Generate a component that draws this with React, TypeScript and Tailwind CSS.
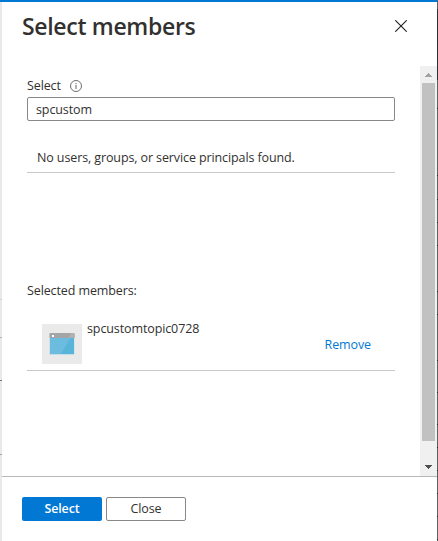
import React from "react";

const leftTicks = [
  { top: 299, color: "bg-[#d2d2d2]" },
  { top: 337, color: "bg-[#b0b0b0]" },
  { top: 380, color: "bg-[#777777]" },
  { top: 454, color: "bg-[#a5a5a5]" },
];

const rightTicks = [41, 108, 175, 199, 222, 245, 291, 314, 360, 392, 424, 447, 470, 493, 516, 539];

function InfoIcon() {
  return (
    <svg className="ml-[9px] h-3 w-3" viewBox="0 0 12 12" fill="none" stroke="#605e5c">
      <circle cx="6" cy="6" r="5.5" strokeWidth="0.9" />
      <path d="M6 5v4M6 3v1.1" strokeWidth="1" />
    </svg>
  );
}

function AppIcon() {
  return (
    <div className="flex h-10 w-10 items-center justify-center bg-[#eaeaea]">
      <svg className="h-[22px] w-[26px]" viewBox="0 0 26 22">
        <rect x="0.4" y="0" width="25" height="22" rx="1" fill="#c4dde7" />
        <path d="M1 5h24v16H1z" fill="#59b4d9" />
        <path d="M1 5h20.500L12 21H1z" fill="#6bbcde" />
        <path d="M0.500 1q0-1 1-1h23q1 0 1 1v4h-25z" fill="#a3a5a6" />
        <path d="M22 0h2.500q1 0 1 1v4h-6z" fill="#afb0b1" />
        <rect x="3" y="2" width="2" height="2" fill="#fff" />
      </svg>
    </div>
  );
}

function Scrollbar() {
  return (
    <div className="flex w-[17px] shrink-0 flex-col items-center bg-[#f0f0f0]">
      <div className="flex h-[17px] items-center justify-center">
        <svg className="h-[17px] w-[17px]" viewBox="0 0 17 17" shapeRendering="crispEdges">
          <path d="M8 7h1v1h1v1h1v1h1v1H5v-1h1V9h1V8h1z" fill="#a3a3a3" />
        </svg>
      </div>
      <div className="h-[358px] w-[13px] bg-[#c1c1c1]" />
      <div className="mt-auto">
        <svg className="h-[17px] w-[17px]" viewBox="0 0 17 17" shapeRendering="crispEdges">
          <path d="M5 6h7v1h-1v1h-1v1H9v1H8V9H7V8H6V7H5z" fill="#505050" />
        </svg>
      </div>
    </div>
  );
}

export default function App() {
  return (
    <div className="relative flex h-[541px] w-[438px] flex-col overflow-hidden bg-[#5f6062] pr-px font-['Segoe_UI','Open_Sans','Noto_Sans',sans-serif] text-[12.500px] leading-[18px] tracking-[-0.11px] text-[#323130]">
      <div className="h-[2px] shrink-0 bg-[#0078d4]" />
      <div className="flex min-h-0 flex-1 border-l-2 border-[#e9e9e9] bg-white">
        <div className="flex min-w-0 flex-1 flex-col">
          <header className="flex h-16 shrink-0 justify-between pl-5 pr-[30px]">
            <h1 className="mt-2 whitespace-nowrap text-[23px] font-semibold leading-8 tracking-[-0.32px]">
              Select members
            </h1>
            <button aria-label="Close panel" className="mt-[18px] h-3 w-3">
              <svg className="h-3 w-3" viewBox="0 0 12 12" stroke="#201f1e" strokeWidth="1.100">
                <path d="M0.300 0.300l11.400 11.400M11.700 0.300L0.300 11.700" />
              </svg>
            </button>
          </header>

          <div className="flex h-[410px] shrink-0">
            <main className="min-w-0 flex-1 pl-[25px] pr-[25px]">
              <div className="mt-[11px] flex h-[18px] items-center">
                <label htmlFor="member-search">Select</label>
                <InfoIcon />
              </div>
              <input
                id="member-search"
                defaultValue="spcustom"
                className="mt-[2px] block h-6 w-full rounded-[2px] border border-[#8a8886] bg-white px-2 tracking-[-0.11px] outline-none"
              />
              <p className="flex h-[52px] items-center whitespace-nowrap border-b border-[#c8c8c8] pl-[10px] pt-[23px] pb-0">
                No users, groups, or service principals found.
              </p>
              <h2 className="mt-[109px]">Selected members:</h2>
              <div className="flex h-[71px] border-b border-[#c8c8c8] pl-[15px] pr-6 pt-[24px]">
                <AppIcon />
                <span className="ml-[5px] -mt-1">spcustomtopic0728</span>
                <button className="ml-auto mt-3 h-[18px] tracking-[-0.11px] text-[#0078d4]">Remove</button>
              </div>
            </main>
            <Scrollbar />
          </div>

          <footer className="flex flex-1 gap-1 border-t border-[#b8b8b8] pl-5 pt-5">
            <button className="h-6 w-20 rounded-[2px] bg-[#0078d4] pb-px font-semibold tracking-[-0.15px] text-white">
              Select
            </button>
            <button className="h-6 w-20 rounded-[2px] border border-[#8a8886] bg-white pb-px">Close</button>
          </footer>
        </div>
      </div>
      <i className="absolute right-0 top-[9px] h-[71px] w-px bg-[#2d2e31]" />
      {leftTicks.map((t) => (
        <i key={t.top} className={`absolute left-0 h-px w-[2px] ${t.color}`} style={{ top: t.top }} />
      ))}
      {rightTicks.map((top) => (
        <i key={top} className="absolute right-0 h-px w-px bg-[#25272b]" style={{ top }} />
      ))}
    </div>
  );
}
